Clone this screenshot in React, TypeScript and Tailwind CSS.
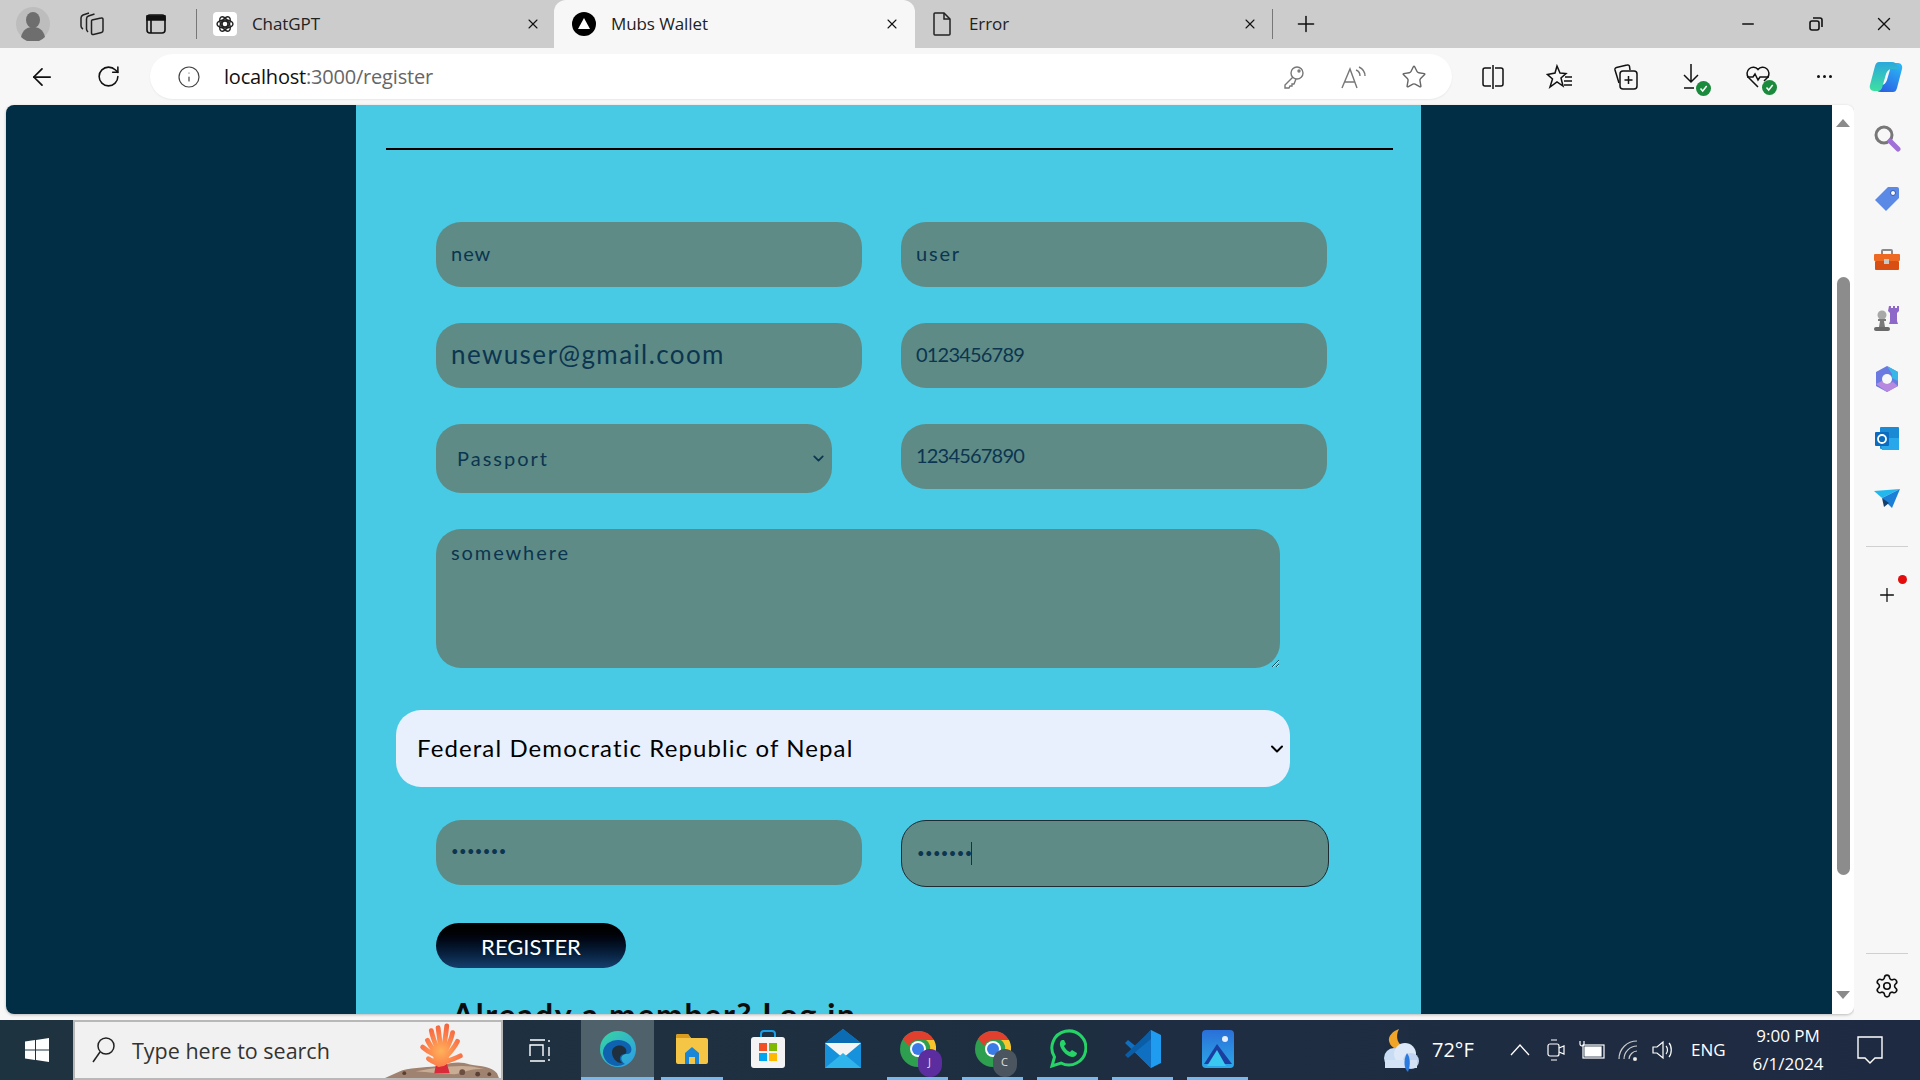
import { ArrowLeft, ChevronDown, Info, Minus, Plus, RotateCw, Settings, Star, X } from "lucide-react";

const fieldBase =
  "rounded-[25px] bg-[#5e8b86] text-[#0b3550] outline-none font-['Lato',sans-serif]";
const inputBase = `${fieldBase} h-[65px] w-[426px] px-[15px] pb-[3px]`;

function Slot({ w, children, className = "" }: { w: number | string; children?: React.ReactNode; className?: string }) {
  return (
    <div className={`flex shrink-0 items-center justify-center ${className}`} style={{ width: w }}>
      {children}
    </div>
  );
}

function Tab({
  title,
  icon,
  active,
  w,
  pl,
  pr,
}: {
  title: string;
  icon: React.ReactNode;
  active?: boolean;
  w: number;
  pl: number;
  pr: number;
}) {
  return (
    <div
      className={`flex h-full shrink-0 items-center ${active ? "rounded-t-xl bg-[#f7f7f7]" : ""}`}
      style={{ width: w, paddingLeft: pl, paddingRight: pr }}
    >
      <div className="flex w-[24px] items-center justify-center">{icon}</div>
      <span className="ml-[15px] flex-1 text-[17px] tracking-[-0.1px] text-[#222]">{title}</span>
      <X size={16} strokeWidth={1.6} className="text-[#111]" />
    </div>
  );
}

function TabStrip() {
  return (
    <div className="flex h-[48px] shrink-0 items-center bg-[#cccccc]">
      <Slot w={66}>
        <svg width="34" height="34" viewBox="0 0 34 34">
          <circle cx="17" cy="17" r="17" fill="#bdbdbd" />
          <ellipse cx="17" cy="13" rx="7" ry="8" fill="#6e6e6e" />
          <path d="M5 30c2-8 7-10 12-10s10 2 12 10a17 17 0 0 1-24 0z" fill="#6e6e6e" />
        </svg>
      </Slot>
      <Slot w={52}>
        <svg width="26" height="26" viewBox="0 0 26 26" fill="none" stroke="#222" strokeWidth="1.5">
          <path d="M13 9l9-2a1.500 1.500 0 0 1 2 1.500v11a2 2 0 0 1-1.500 2l-8 2a1.500 1.500 0 0 1-2-1.500V10.500A1.500 1.500 0 0 1 13 9z" />
          <path d="M9 21c-1-1-1.500-2-1.500-3V8c0-1.500.5-2.500 2-3l6-2" />
          <path d="M4 18c-1-.5-2-2-2-3V7c0-1.500 1-2.500 2-3l6-2" />
        </svg>
      </Slot>
      <Slot w={52} className="ml-[12px]">
        <svg width="24" height="24" viewBox="0 0 24 24" fill="none" stroke="#111" strokeWidth="1.6">
          <rect x="3" y="3" width="18" height="18" rx="3" />
          <path d="M3 4h18v4H3z" fill="#111" />
          <path d="M7 8v13" />
        </svg>
      </Slot>
      <div className="ml-[14px] h-[30px] w-px bg-[#777]" />
      <div className="ml-[8px] flex h-full">
        <Tab
          w={349}
          pl={8}
          pr={13}
          title="ChatGPT"
          icon={
            <div className="flex h-[24px] w-[24px] items-center justify-center rounded bg-white">
              <svg width="20" height="20" viewBox="0 0 20 20" fill="none" stroke="#222" strokeWidth="1.4">
                <circle cx="10" cy="10" r="3" />
                <ellipse cx="10" cy="10" rx="8" ry="4" />
                <ellipse cx="10" cy="10" rx="8" ry="4" transform="rotate(60 10 10)" />
                <ellipse cx="10" cy="10" rx="8" ry="4" transform="rotate(120 10 10)" />
              </svg>
            </div>
          }
        />
        <Tab
          active
          w={361}
          pl={18}
          pr={15}
          title="Mubs Wallet"
          icon={
            <svg width="24" height="24" viewBox="0 0 24 24">
              <circle cx="12" cy="12" r="12" fill="#000" />
              <path d="M12 6 18 17H6z" fill="#fff" />
            </svg>
          }
        />
        <Tab
          w={357}
          pl={15}
          pr={14}
          title="Error"
          icon={
            <svg width="22" height="26" viewBox="0 0 22 26" fill="none" stroke="#222" strokeWidth="1.5">
              <path d="M3 3a1 1 0 0 1 1-1h9l6 6v15a1 1 0 0 1-1 1H4a1 1 0 0 1-1-1z" />
              <path d="M13 2v6h6" />
            </svg>
          }
        />
      </div>
      <div className="h-[30px] w-px bg-[#777]" />
      <Slot w={66}>
        <Plus size={26} strokeWidth={1.4} className="text-[#111]" />
      </Slot>
      <div className="flex-1" />
      <Slot w={68}>
        <Minus size={18} strokeWidth={2} className="text-[#111]" />
      </Slot>
      <Slot w={68}>
        <svg width="16" height="16" viewBox="0 0 16 16" fill="none" stroke="#111" strokeWidth="1.6">
          <rect x="2" y="5" width="9" height="9" rx="2" />
          <path d="M5 2h7a2 2 0 0 1 2 2v7" />
        </svg>
      </Slot>
      <Slot w={68} className="mr-[2px]">
        <X size={22} strokeWidth={1.5} className="text-[#111]" />
      </Slot>
    </div>
  );
}

function Badge() {
  return (
    <span className="absolute -bottom-[5px] -right-[6px] flex h-[15px] w-[15px] items-center justify-center rounded-full bg-[#1a8a3c]">
      <svg width="9" height="9" viewBox="0 0 9 9" fill="none" stroke="#fff" strokeWidth="1.5">
        <path d="M1.5 4.5 3.7 7l4-5" />
      </svg>
    </span>
  );
}

function Toolbar() {
  return (
    <div className="flex h-[57px] shrink-0 items-center bg-[#f7f7f7]">
      <Slot w={84}>
        <ArrowLeft size={28} strokeWidth={1.5} className="text-[#111]" />
      </Slot>
      <Slot w={48}>
        <RotateCw size={25} strokeWidth={1.5} className="text-[#111]" />
      </Slot>
      <div className="ml-[18px] flex h-[45px] w-[1302px] shrink-0 items-center rounded-full bg-white pl-[27px] shadow-[0_1px_2px_rgba(0,0,0,0.06)]">
        <Info size={24} strokeWidth={1.2} className="text-[#444]" />
        <span className="ml-[23px] flex-1 text-[20px] tracking-[-0.2px] text-[#111]">
          localhost<span className="text-[#666]">:3000/register</span>
        </span>
        <Slot w={60}>
          <svg width="24" height="26" viewBox="0 0 24 26" fill="none" stroke="#777" strokeWidth="1.4">
            <circle cx="15" cy="9" r="6" />
            <path d="M11 13 3 21v3h4l1-2h2v-2h2l2-5" />
            <circle cx="17" cy="7" r="1" />
          </svg>
        </Slot>
        <Slot w={60}>
          <svg width="28" height="26" viewBox="0 0 28 26" fill="none" stroke="#777" strokeWidth="1.4">
            <path d="M2 24 10 5l7 19M5 18h10" />
            <path d="M16 6c3 1 4 3 4 6M19 3c4 2 6 5 6 9" />
          </svg>
        </Slot>
        <Slot w={60}>
          <Star size={26} strokeWidth={1.3} className="text-[#666]" />
        </Slot>
        <div className="w-[8px]" />
      </div>
      <Slot w={82}>
        <svg width="26" height="26" viewBox="0 0 26 26" fill="none" stroke="#111" strokeWidth="1.5">
          <path d="M11 4H5a2 2 0 0 0-2 2v14a2 2 0 0 0 2 2h6M15 4h6a2 2 0 0 1 2 2v14a2 2 0 0 1-2 2h-6M13 1v24" />
        </svg>
      </Slot>
      <Slot w={52}>
        <svg width="28" height="26" viewBox="0 0 28 26" fill="none" stroke="#111" strokeWidth="1.5">
          <path d="M11 2 14 9l6 .5-5 4.5 2 8-6-4-7 5 2.500-8-5-4.500L9 9z" />
          <path d="M19 13h7M18 17h8M18 21h8" />
        </svg>
      </Slot>
      <Slot w={80}>
        <svg width="28" height="28" viewBox="0 0 28 28" fill="none" stroke="#111" strokeWidth="1.5">
          <path d="M7 20 3 7a2 2 0 0 1 1.500-2.500L15 2a2 2 0 0 1 2.500 1.500L18 7" />
          <rect x="8" y="8" width="17" height="18" rx="3" />
          <path d="M16.500 13v8M12.500 17h8" />
        </svg>
      </Slot>
      <Slot w={54}>
        <div className="relative">
          <svg width="24" height="28" viewBox="0 0 24 28" fill="none" stroke="#111" strokeWidth="1.5">
            <path d="M10 1v18M3 12l7 7 7-7M3 25h10" />
          </svg>
          <Badge />
        </div>
      </Slot>
      <Slot w={76}>
        <div className="relative">
          <svg width="26" height="26" viewBox="0 0 26 26" fill="none" stroke="#111" strokeWidth="1.5">
            <path d="M13 23 3.500 13.500a6 6 0 0 1 9.500-8 6 6 0 0 1 9.500 8L19 17" />
            <path d="M2 13h6l2-3 3 6 2-3h9" />
          </svg>
          <Badge />
        </div>
      </Slot>
      <Slot w={56}>
        <div className="flex gap-[3px]">
          <span className="h-[3px] w-[3px] rounded-full bg-[#111]" />
          <span className="h-[3px] w-[3px] rounded-full bg-[#111]" />
          <span className="h-[3px] w-[3px] rounded-full bg-[#111]" />
        </div>
      </Slot>
      <Slot w={68}>
        <svg width="35" height="34" viewBox="0 0 35 34">
          <defs>
            <linearGradient id="cp1" x1="0.3" y1="0" x2="0.3" y2="1">
              <stop offset="0" stopColor="#2aa8dc" />
              <stop offset="1" stopColor="#3ee0a0" />
            </linearGradient>
            <linearGradient id="cp2" x1="0.7" y1="0" x2="0.2" y2="1">
              <stop offset="0" stopColor="#2bb4f4" />
              <stop offset="1" stopColor="#2a5ee4" />
            </linearGradient>
          </defs>
          <path d="M25 32H12c-3 0-4-1-5-4l-1-3h6c3 0 5-2 6-5l4-14c1-2 2-3 4-3h3c3 0 5 3 4 6l-5 19c-1 3-2 4-4 4z" fill="url(#cp2)" />
          <path d="M10 2h13c3 0 4 1 5 4l1 3h-6c-3 0-5 2-6 5l-4 14c-1 2-2 3-4 3H5c-3 0-5-3-4-6l5-19c1-3 2-4 4-4z" fill="url(#cp1)" />
        </svg>
      </Slot>
    </div>
  );
}

function Form() {
  return (
    <div className="ml-[350px] h-full w-[1065px] shrink-0 overflow-hidden bg-[#48c9e4]">
      <div className="ml-[30px] mt-[43px] h-[2px] w-[1007px] bg-black" />
      <div className="ml-[80px] mt-[72px] flex flex-col">
        <div className="flex gap-[39px]">
          <input readOnly value="new" className={`${inputBase} text-[20px] tracking-[1px]`} />
          <input readOnly value="user" className={`${inputBase} text-[20px] tracking-[1.8px]`} />
        </div>
        <div className="mt-[36px] flex gap-[39px]">
          <input readOnly value="newuser@gmail.coom" className={`${inputBase} text-[26px] tracking-[1.4px]`} />
          <input readOnly value="0123456789" className={`${inputBase} text-[20px] tracking-[-0.8px]`} />
        </div>
        <div className="mt-[36px] flex items-start gap-[69px]">
          <div className="relative">
            <select className={`${fieldBase} h-[69px] w-[396px] appearance-none pb-[2px] pl-[21px] text-[20px] tracking-[2px]`}>
              <option>Passport</option>
            </select>
            <ChevronDown size={17} strokeWidth={2.4} className="pointer-events-none absolute right-[5px] top-[26px] text-[#0b3550]" />
          </div>
          <input readOnly value="1234567890" className={`${inputBase} text-[20px] tracking-[-0.8px]`} />
        </div>
        <textarea
          readOnly
          value="somewhere"
          className={`${fieldBase} mt-[36px] h-[139px] w-[844px] px-[15px] pb-[10px] pt-[8px] text-[20px] tracking-[1.9px]`}
        />
        <div className="relative -ml-[40px] mt-[42px] w-[894px]">
          <select className="h-[77px] w-full appearance-none rounded-[25px] bg-[#e8f0fe] pb-[2px] pl-[21px] text-[24px] tracking-[1.1px] text-black outline-none font-['Lato',sans-serif]">
            <option>Federal Democratic Republic of Nepal</option>
          </select>
          <ChevronDown size={20} strokeWidth={2.4} className="pointer-events-none absolute right-[3px] top-[29px] text-black" />
        </div>
        <div className="mt-[33px] flex items-start gap-[39px]">
          <input readOnly type="password" value="1234567" className={`${inputBase} text-[13px] tracking-[0.4px]`} />
          <div className="relative">
            <input
              readOnly
              type="password"
              value="1234567"
              className={`${fieldBase} h-[67px] w-[428px] border border-[#1d2b33] px-[15px] pb-[1px] text-[13px] tracking-[0.4px]`}
            />
            <span className="absolute left-[70px] top-[22px] h-[23px] w-px bg-[#0b3550]" />
          </div>
        </div>
        <button className="mt-[36px] h-[45px] w-[190px] rounded-[23px] bg-gradient-to-b from-[#000000] to-[#153f6e] pt-[2px] text-[22px] text-white font-['Lato',sans-serif]">
          REGISTER
        </button>
        <p className="ml-[16px] mt-[29px] text-[32px] font-bold leading-[36px] tracking-[1.6px] text-[#0c0c0c] font-['Lato',sans-serif]">
          Already a member? Log in
        </p>
      </div>
    </div>
  );
}

function Scrollbar() {
  return (
    <div className="flex w-[22px] shrink-0 flex-col items-center bg-white">
      <div className="mt-[14px] h-0 w-0 border-x-[7px] border-b-[8px] border-x-transparent border-b-[#8a8a8a]" />
      <div className="mt-[150px] h-[598px] w-[13px] rounded-full bg-[#8c8c8c]" />
      <div className="mt-[116px] h-0 w-0 border-x-[7px] border-t-[8px] border-x-transparent border-t-[#8a8a8a]" />
    </div>
  );
}

function Sidebar() {
  return (
    <div className="flex w-[66px] shrink-0 flex-col items-center bg-[#f7f7f7] pt-[2px]">
      <div className="flex h-[61px] items-center justify-center">
        <svg width="28" height="28" viewBox="0 0 28 28" fill="none">
          <circle cx="11" cy="11" r="8" stroke="#777" strokeWidth="3" />
          <path d="M17 17l8 8" stroke="#a070d8" strokeWidth="5" strokeLinecap="round" />
        </svg>
      </div>
      <div className="flex h-[61px] items-center justify-center">
        <svg width="26" height="26" viewBox="0 0 26 26">
          <path d="M14 1h9a2 2 0 0 1 2 2v9L12 25 1 14z" fill="#5b8ae6" />
          <circle cx="19" cy="7" r="2.500" fill="#fff" stroke="#3056b8" />
        </svg>
      </div>
      <div className="flex h-[61px] items-center justify-center">
        <svg width="28" height="24" viewBox="0 0 28 24">
          <path d="M9 6V3a1 1 0 0 1 1-1h8a1 1 0 0 1 1 1v3" fill="none" stroke="#8a8a8a" strokeWidth="2" />
          <rect x="1" y="6" width="26" height="7" rx="1" fill="#ee6a22" />
          <rect x="2" y="13" width="24" height="9" rx="1" fill="#d94e12" />
          <rect x="11" y="11" width="5" height="5" fill="#c8c8c8" />
        </svg>
      </div>
      <div className="flex h-[58px] items-center justify-center">
        <svg width="28" height="28" viewBox="0 0 28 28">
          <path d="M16 1h2v2h2V1h2v2h2V1h2v5l-2 2v8l1 3H16l1-3V8l-2-2z" fill="#8d68c8" />
          <circle cx="9" cy="10" r="4.500" fill="#a8a8a8" />
          <path d="M5 14h8v2h-2l1 6H6l1-6H5z" fill="#7a7a7a" />
          <rect x="1" y="22" width="16" height="4" rx="2" fill="#6a6a6a" />
        </svg>
      </div>
      <div className="flex h-[61px] items-center justify-center">
        <svg width="26" height="28" viewBox="0 0 26 28">
          <path d="M13 1 24 7v14l-11 6L2 21V7z" fill="#6a7ae0" />
          <path d="M13 1 24 7v9l-6-3V9z" fill="#38b6e8" />
          <path d="M2 19l6-3 5 3 6-2 5 4-11 6z" fill="#b688e0" />
          <circle cx="13" cy="14" r="5" fill="#f7f7f7" />
        </svg>
      </div>
      <div className="flex h-[60px] items-center justify-center">
        <svg width="26" height="26" viewBox="0 0 26 26">
          <rect x="6" y="1" width="19" height="22" rx="1" fill="#1a8ad4" />
          <path d="M6 12l19 0v12H8z" fill="#28a8ea" />
          <rect x="1" y="6" width="14" height="14" rx="1" fill="#0a6cc0" />
          <circle cx="8" cy="13" r="4" fill="none" stroke="#fff" strokeWidth="1.800" />
        </svg>
      </div>
      <div className="flex h-[60px] items-center justify-center">
        <svg width="26" height="22" viewBox="0 0 26 22">
          <path d="M0 3 26 1 8 10z" fill="#22b8ee" />
          <path d="M26 1 18 20 8 10z" fill="#1b7fd8" />
          <path d="M8 10l2 9 5-4z" fill="#123f6e" />
        </svg>
      </div>
      <div className="mt-[17px] h-px w-[42px] bg-[#d0d0d0]" />
      <div className="relative mt-[37px] flex items-center justify-center">
        <Plus size={22} strokeWidth={1.4} className="text-[#111]" />
        <span className="absolute -right-[9px] -top-[9px] h-[9px] w-[9px] rounded-full bg-[#e30d0d]" />
      </div>
      <div className="mt-[347px] h-px w-[42px] bg-[#d0d0d0]" />
      <div className="mt-[19px] flex items-center justify-center">
        <Settings size={26} strokeWidth={1.5} className="text-[#111]" />
      </div>
    </div>
  );
}

function TaskIcon({ w, active, line, children }: { w: number; active?: boolean; line?: boolean; children: React.ReactNode }) {
  return (
    <div className={`flex h-full shrink-0 flex-col ${active ? "bg-[#4f626b]" : ""}`} style={{ width: w }}>
      <div className="flex flex-1 items-center justify-center">{children}</div>
      <div className={`h-[3px] ${active ? "" : "mx-[7px]"} ${line ? "bg-[#76b9ed]" : ""}`} />
    </div>
  );
}

function ChromeLogo({ letter, badge }: { letter: string; badge: string }) {
  return (
    <div className="relative">
      <svg width="36" height="36" viewBox="0 0 36 36">
        <circle cx="18" cy="18" r="18" fill="#2e9e4f" />
        <path d="M18 0a18 18 0 0 1 16 9H18a9 9 0 0 0-9 6L3 8a18 18 0 0 1 15-8z" fill="#e2402f" />
        <path d="M34 9a18 18 0 0 1-12 26l7-14a9 9 0 0 0-3-12z" fill="#f8c52c" />
        <circle cx="18" cy="18" r="8" fill="#fff" />
        <circle cx="18" cy="18" r="6" fill="#3a7be8" />
      </svg>
      <span
        className={`absolute -bottom-[10px] -right-[6px] flex h-[28px] w-[24px] items-center justify-center rounded-full text-[11px] text-[#e0e0e0] ${badge}`}
      >
        {letter}
      </span>
    </div>
  );
}

function Coral() {
  const branches = [
    "M60 40C58 34 50 34 41 26",
    "M60 40C56 32 50 28 46 19",
    "M60 38C57 28 52 20 50 9",
    "M60 36C60 26 58 14 57 6",
    "M61 36C63 26 65 14 66 4",
    "M61 38C64 30 70 22 72 11",
    "M62 40C66 34 72 30 77 20",
    "M62 42C68 40 74 38 80 35",
    "M58 44C54 42 50 40 47 38",
  ];
  return (
    <svg width="120" height="56" viewBox="0 0 120 58" className="ml-auto shrink-0">
      <defs>
        <radialGradient id="coral" gradientUnits="userSpaceOnUse" cx="60" cy="30" r="30">
          <stop offset="0" stopColor="#ffb25a" />
          <stop offset="0.6" stopColor="#fb7a48" />
          <stop offset="1" stopColor="#f0603e" />
        </radialGradient>
      </defs>
      <path d="M2 58 20 50c12-3 28-3 40-5 12-4 22-4 30-1 12 2 22 2 28 9l2 5z" fill="#a08270" />
      <path d="M34 51c16-3 40-7 58-5l14 3c-16-2-22 4-32 5-16 0-26-2-40-3z" fill="#c9ac94" />
      <circle cx="22" cy="53" r="2" fill="#5a4034" />
      <circle cx="82" cy="52" r="3" fill="#6a4e40" />
      <circle cx="98" cy="54" r="2.500" fill="#5a4034" />
      <circle cx="110" cy="54" r="2" fill="#5a4034" />
      <path d="M55 43h11l3 10H53z" fill="#d82a38" />
      {branches.map((d) => (
        <path key={d} d={d} fill="none" stroke="url(#coral)" strokeWidth="5" strokeLinecap="round" />
      ))}
      <circle cx="60" cy="38" r="8" fill="url(#coral)" />
    </svg>
  );
}

function Taskbar() {
  return (
    <div className="flex h-[60px] shrink-0 items-center bg-gradient-to-r from-[#1e3340] to-[#1e2a42] text-white">
      <Slot w={73}>
        <svg width="24" height="24" viewBox="0 0 24 24" fill="#fff">
          <path d="M0 3.500 10 2v9.500H0zM11 1.900 24 0v11.500H11zM0 12.500h10V22L0 20.500zM11 12.500h13V24l-13-1.900z" />
        </svg>
      </Slot>
      <div className="flex h-full w-[430px] shrink-0 items-center overflow-hidden border-2 border-[#b8b8b8] bg-[#f1f1f1] pl-[16px]">
        <svg width="26" height="28" viewBox="0 0 26 28" fill="none" stroke="#222" strokeWidth="1.5" className="shrink-0">
          <circle cx="15" cy="10" r="8" />
          <path d="M9 16 2 26" />
        </svg>
        <span className="ml-[15px] pt-[2px] text-[21.5px] text-[#333]">Type here to search</span>
        <Coral />
      </div>
      <Slot w={75} className="mr-[3px]">
        <svg width="26" height="26" viewBox="0 0 26 26" fill="none" stroke="#fff" strokeWidth="1.4">
          <path d="M2 3h15M2 24h15M2 19V8h13v11M21 3v2M21 10v9M21 22v2" />
        </svg>
      </Slot>
      <TaskIcon w={73} active line>
        <svg width="38" height="38" viewBox="0 0 38 38">
          <defs>
            <linearGradient id="edge1" x1="0" y1="0" x2="1" y2="1">
              <stop offset="0" stopColor="#38d6a0" />
              <stop offset="1" stopColor="#2c9ae8" />
            </linearGradient>
          </defs>
          <circle cx="19" cy="19" r="18" fill="url(#edge1)" />
          <path d="M4 24C3 10 22 6 30 14c4 4 3 10-2 10-6 0-8 6-2 10-10 5-20 0-22-10z" fill="#0f62b0" />
          <path d="M13 22c0-6 8-8 12-5 3 2 3 6 1 7-5 0-7 5-3 9-6 0-10-5-10-11z" fill="#1f2f3d" />
        </svg>
      </TaskIcon>
      <TaskIcon w={76} line>
        <svg width="34" height="32" viewBox="0 0 34 32">
          <path d="M1 3a2 2 0 0 1 2-2h10l3 4h15a2 2 0 0 1 2 2v22a2 2 0 0 1-2 2H3a2 2 0 0 1-2-2z" fill="#f5c645" />
          <path d="M1 3a2 2 0 0 1 2-2h10l3 4H1z" fill="#d99c1c" />
          <path d="M10 20l7-6 7 6v11h-4v-7h-6v7h-4z" fill="#1a86d8" />
        </svg>
      </TaskIcon>
      <TaskIcon w={75}>
        <svg width="36" height="40" viewBox="0 0 36 40">
          <path d="M11 9V5a3 3 0 0 1 3-3h8a3 3 0 0 1 3 3v4" fill="none" stroke="#1aa0e8" strokeWidth="2" />
          <rect x="1" y="8" width="34" height="31" rx="3" fill="#f4f4f4" />
          <rect x="9" y="14" width="8" height="8" fill="#f25022" />
          <rect x="19" y="14" width="8" height="8" fill="#7fba00" />
          <rect x="9" y="24" width="8" height="8" fill="#00a4ef" />
          <rect x="19" y="24" width="8" height="8" fill="#ffb900" />
        </svg>
      </TaskIcon>
      <TaskIcon w={75}>
        <svg width="36" height="40" viewBox="0 0 36 40">
          <path d="M18 0 36 14v25H0V14z" fill="#1692dc" />
          <path d="M0 14h36L18 29z" fill="#f4f4f4" />
          <path d="M18 0 36 14H0z" fill="#0b6cb4" />
          <path d="M6 14h24L18 26z" fill="#f4f4f4" />
          <path d="M0 39 18 24l18 15z" fill="#30b4ec" />
        </svg>
      </TaskIcon>
      <TaskIcon w={75} line>
        <ChromeLogo letter="J" badge="bg-[#5b2d9e]" />
      </TaskIcon>
      <TaskIcon w={75} line>
        <ChromeLogo letter="C" badge="bg-[#4a5560]" />
      </TaskIcon>
      <TaskIcon w={75} line>
        <svg width="38" height="40" viewBox="0 0 38 40" fill="none">
          <path d="M3 37l2.500-9A17 17 0 1 1 12 34z" stroke="#25d366" strokeWidth="3" />
          <path d="M13 11c-2 1-3 4-1 8 2 4 6 8 11 9 3 0 5-2 5-4l-5-3-2 2c-3-1-5-4-6-6l2-2-2-4z" fill="#25d366" />
        </svg>
      </TaskIcon>
      <TaskIcon w={75} line>
        <svg width="38" height="40" viewBox="0 0 38 40">
          <path d="M27 1 37 6v28l-10 5L9 21z" fill="#1f9cf0" />
          <path d="M27 1v38L1 14l3-3 10 8z" fill="#0f6fc0" />
          <path d="M1 26l3 3L27 10V1z" fill="#0a5ea8" />
        </svg>
      </TaskIcon>
      <TaskIcon w={75} line>
        <svg width="32" height="38" viewBox="0 0 32 38">
          <defs>
            <linearGradient id="ph1" x1="0" y1="0" x2="0" y2="1">
              <stop offset="0" stopColor="#2a70d8" />
              <stop offset="1" stopColor="#2ca8e8" />
            </linearGradient>
          </defs>
          <rect width="32" height="38" rx="4" fill="url(#ph1)" />
          <circle cx="23" cy="9" r="3" fill="#e8f0ff" />
          <path d="M2 34 15 14l15 20z" fill="#1a3fa0" />
          <path d="M5 36 15 20l9 16z" fill="#38c8f0" />
        </svg>
      </TaskIcon>
      <div className="flex-1" />
      <svg width="40" height="44" viewBox="0 0 40 44" className="shrink-0">
        <path d="M18 1c-4 7-2 17 8 19-6 3-16 2-18-7-1-5 4-10 10-12z" fill="#f0a428" />
        <circle cx="13" cy="30" r="10" fill="#c8dcf4" />
        <circle cx="24" cy="26" r="11" fill="#dce8f8" />
        <circle cx="30" cy="33" r="8" fill="#c0d4f0" />
        <path d="M4 32h32v8H4z" fill="#d4e2f6" />
        <path d="M26 25c3 4 4 11 1 19-4-3-5-12-1-19z" fill="#2a7ae0" />
      </svg>
      <span className="ml-[11px] w-[66px] text-[20px]">72°F</span>
      <Slot w={44}>
        <svg width="22" height="14" viewBox="0 0 22 14" fill="none" stroke="#fff" strokeWidth="1.3">
          <path d="M2 12 11 2l9 10" />
        </svg>
      </Slot>
      <Slot w={28}>
        <svg width="20" height="24" viewBox="0 0 20 24" fill="none" stroke="#fff" strokeWidth="1.2">
          <rect x="2" y="6" width="11" height="12" rx="2" />
          <path d="M13 10l5-2v8l-5-2M5 2h6M5 22h6" />
        </svg>
      </Slot>
      <Slot w={44}>
        <svg width="26" height="20" viewBox="0 0 26 20" fill="none" stroke="#fff" strokeWidth="1.2">
          <rect x="4" y="5" width="21" height="13" />
          <rect x="6" y="7" width="16" height="9" fill="#fff" />
          <path d="M1 1v3a2 2 0 0 0 4 0V1" />
        </svg>
      </Slot>
      <Slot w={30}>
        <svg width="24" height="22" viewBox="0 0 24 22" fill="none" stroke="#ccc" strokeWidth="1.2">
          <path d="M2 20C2 10 10 2 20 2M7 20c0-7 6-13 13-13M12 20c0-4 4-8 8-8" />
          <circle cx="18" cy="20" r="1.500" fill="#fff" />
        </svg>
      </Slot>
      <Slot w={38}>
        <svg width="24" height="24" viewBox="0 0 24 24" fill="none" stroke="#fff" strokeWidth="1.2">
          <path d="M2 9v6h4l6 5V4L6 9zM15 8c2 2 2 6 0 8M18 5c3 3 3 11 0 14" />
        </svg>
      </Slot>
      <span className="ml-[9px] w-[57px] text-[17px]">ENG</span>
      <div className="flex w-[80px] flex-col items-center text-[17px] leading-[28px]">
        <span>9:00 PM</span>
        <span>6/1/2024</span>
      </div>
      <Slot w={84} className="mr-[8px]">
        <svg width="26" height="28" viewBox="0 0 26 28" fill="none" stroke="#fff" strokeWidth="1.4">
          <path d="M1 1h24v21h-7l-5 5-5-5H1z" />
        </svg>
      </Slot>
    </div>
  );
}

export default function App() {
  return (
    <div className="flex h-[1080px] w-[1920px] flex-col overflow-hidden bg-[#f7f7f7] font-['Open_Sans',sans-serif]">
      <TabStrip />
      <Toolbar />
      <div className="flex h-[909px] shrink-0">
        <div className="ml-[6px] flex w-[1848px] shrink-0 overflow-hidden rounded-lg shadow-[0_1px_3px_rgba(0,0,0,0.25)]">
          <div className="h-full flex-1 bg-[#012e44]">
            <Form />
          </div>
          <Scrollbar />
        </div>
        <Sidebar />
      </div>
      <div className="h-[6px] shrink-0" />
      <Taskbar />
    </div>
  );
}
